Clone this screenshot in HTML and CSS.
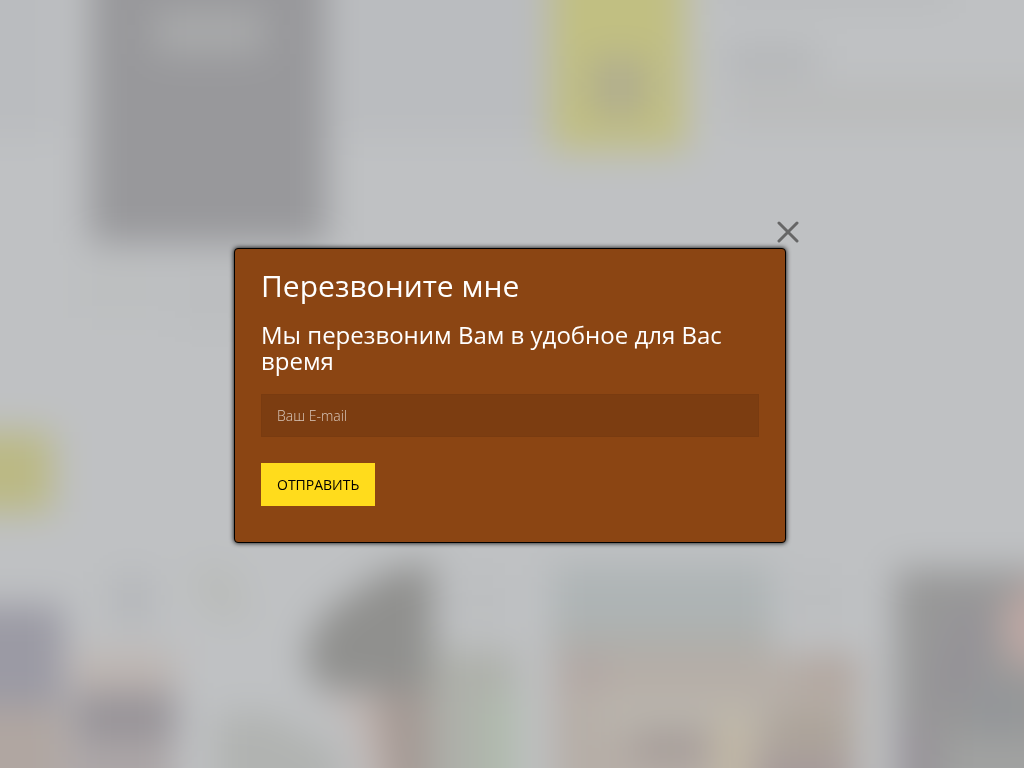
FILE: index.html
```html
<!DOCTYPE html>
<html lang="ru">
<head>
<meta charset="UTF-8" />
<meta name="viewport" content="width=device-width, initial-scale=1" />
<title>Перезвоните мне</title>
<link rel="stylesheet" href="styles.css">
</head>
<body>

<!-- Blurred page behind the popup -->
<svg class="backdrop" viewBox="0 0 1024 768" preserveAspectRatio="xMidYMid slice" aria-hidden="true">
  <defs>
    <filter id="blur" x="-200" y="-200" width="1424" height="1168" filterUnits="userSpaceOnUse" color-interpolation-filters="sRGB">
      <feGaussianBlur stdDeviation="18" />
    </filter>
  </defs>
  <g filter="url(#blur)">
    <rect x="-100" y="-100" width="1224" height="968" fill="#bfc1c3" />

    <!-- Product cards -->
    <rect x="-100" y="-100" width="158" height="238" fill="#babcbf" />
    <rect x="340" y="-100" width="210" height="238" fill="#babcbf" />
    <rect x="90" y="-100" width="237" height="343" fill="#98989b" />
    <rect x="154" y="10" width="110" height="44" fill="#a9aaab" />
    <rect x="80" y="260" width="80" height="58" fill="#bdbfc0" />
    <rect x="175" y="260" width="70" height="70" fill="#bcbec0" />

    <!-- Yellow banner and lines of text -->
    <rect x="551" y="-100" width="135" height="250" fill="#c1bf82" />
    <rect x="590" y="56" width="58" height="62" fill="#b1ae8e" />
    <rect x="720" y="-20" width="230" height="22" fill="#b7b9bb" />
    <rect x="725" y="46" width="92" height="28" fill="#b3b5b7" />
    <rect x="725" y="86" width="325" height="38" fill="#babbbb" />

    <rect x="-100" y="432" width="153" height="80" fill="#bbb984" />

    <!-- Gallery -->
    <rect x="112" y="575" width="40" height="50" fill="#b4b6b9" />
    <path d="M190 568L232 566L250 622L206 614Z" fill="#b9bbb8" />
    <rect x="-100" y="605" width="164" height="110" fill="#9b9aa4" />
    <rect x="-100" y="706" width="166" height="160" fill="#b0a6a1" />
    <rect x="70" y="650" width="106" height="46" fill="#beb6b2" />
    <rect x="74" y="692" width="102" height="48" fill="#979398" />
    <rect x="70" y="740" width="104" height="120" fill="#aca6a7" />
    <path d="M216 715L266 712L338 750L350 870H216Z" fill="#b1b3b1" />
    <path d="M434 562V696L316 688L304 650L326 612L384 572Z" fill="#90908e" />
    <path d="M318 698H400L440 870H382L356 720Z" fill="#c0b3ae" />
    <path d="M376 690H430V870H402Z" fill="#a49994" />
    <rect x="430" y="650" width="85" height="220" fill="#aeb0aa" />
    <rect x="482" y="690" width="36" height="180" fill="#b0bbad" />
    <rect x="466" y="575" width="30" height="50" fill="#babcbe" />

    <rect x="553" y="565" width="220" height="90" fill="#aeb4b5" />
    <rect x="553" y="628" width="220" height="35" fill="#aeaeaa" />
    <rect x="553" y="655" width="306" height="215" fill="#b6aea7" />
    <rect x="564" y="660" width="42" height="24" fill="#b1a4a3" />
    <rect x="596" y="700" width="170" height="28" fill="#bab6ae" />
    <rect x="804" y="654" width="54" height="40" fill="#b2a69f" />
    <rect x="634" y="732" width="74" height="30" fill="#a49a97" />
    <rect x="716" y="714" width="34" height="94" fill="#c2b9a6" />
    <rect x="768" y="714" width="82" height="38" fill="#aba298" />
    <rect x="756" y="758" width="94" height="60" fill="#a49898" />
    <rect x="803" y="575" width="30" height="50" fill="#babcbe" />

    <rect x="895" y="569" width="240" height="300" fill="#989898" />
    <path d="M960 606H986L972 696L926 704Z" fill="#949197" />
    <path d="M1000 606L1060 566V672L1008 662Z" fill="#bea8a4" />
    <rect x="972" y="688" width="50" height="46" fill="#939699" />
    <rect x="900" y="720" width="30" height="80" fill="#98939a" />
    <rect x="945" y="738" width="150" height="100" fill="#a1a2a1" />
  </g>
</svg>

<div class="overlay">
  <div class="popup">
    <button type="button" class="popup-close" aria-label="Закрыть">
      <svg class="popup-close-icon" viewBox="0 0 22 22">
        <path d="M2 2L20 20M20 2L2 20" />
      </svg>
    </button>
    <form class="popup-box">
      <h2 class="popup-title">Перезвоните мне</h2>
      <h3 class="popup-text">Мы перезвоним Вам в удобное для Вас время</h3>
      <input type="email" class="popup-input" placeholder="Ваш E-mail" aria-label="Ваш E-mail">
      <button type="submit" class="popup-submit">Отправить</button>
    </form>
  </div>
</div>

<script>
  const overlay = document.querySelector('.overlay');

  document.querySelector('.popup-close').addEventListener('click', () => {
    overlay.hidden = true;
  });

  document.querySelector('.popup-box').addEventListener('submit', e => {
    e.preventDefault();
  });
</script>

</body>
</html>
```

FILE: styles.css
```css
* {
  box-sizing: border-box;
}
body {
  margin: 0;
  background: #bfc1c3;
  color: #fff;
  font-family: "Open Sans", "Noto Sans", sans-serif;
  font-size: 14px;
}
.backdrop {
  position: fixed;
  inset: 0;
  width: 100%;
  height: 100%;
}
.overlay {
  position: fixed;
  inset: 0;
  display: flex;
  align-items: center;
  justify-content: center;
  overflow: auto;
}
.overlay[hidden] {
  display: none;
}
.popup {
  display: flex;
  flex-direction: column;
  width: 100%;
  max-width: 556px;
  padding-right: 4px;
}
.popup-close {
  align-self: flex-end;
  margin: -4px -13px 5px 0;
  padding: 0;
  border: 0;
  background: none;
  line-height: 0;
  cursor: pointer;
}
.popup-close-icon {
  width: 22px;
  height: 22px;
  fill: none;
  stroke: #666;
  stroke-width: 3;
  stroke-linecap: round;
}
.popup-box {
  padding: 20px 26px 36px;
  border: 1px solid #000;
  border-radius: 4px;
  background: #8b4513;
  box-shadow: 0 0 5px #000;
}
.popup-title,
.popup-text {
  margin: 0 0 20px;
  font-weight: 400;
}
.popup-title {
  font-size: 30px;
  line-height: 33px;
}
.popup-text {
  font-size: 24px;
  line-height: 26px;
}
.popup-input {
  display: block;
  width: 100%;
  height: 43px;
  margin-bottom: 26px;
  padding: 0 15px;
  border: 1px solid rgba(0, 0, 0, 0.02);
  border-radius: 0;
  outline: 0;
  background: rgba(0, 0, 0, 0.1);
  color: #fff;
  font: 300 14px "Open Sans", "Noto Sans", sans-serif;
}
.popup-input::placeholder {
  color: #fff;
  opacity: 0.7;
}
.popup-submit {
  display: block;
  height: 43px;
  padding: 0 16px;
  border: 0;
  background: #ffdc1c;
  color: #000;
  font: 400 14px "Open Sans", "Noto Sans", sans-serif;
  text-transform: uppercase;
  cursor: pointer;
}
```
